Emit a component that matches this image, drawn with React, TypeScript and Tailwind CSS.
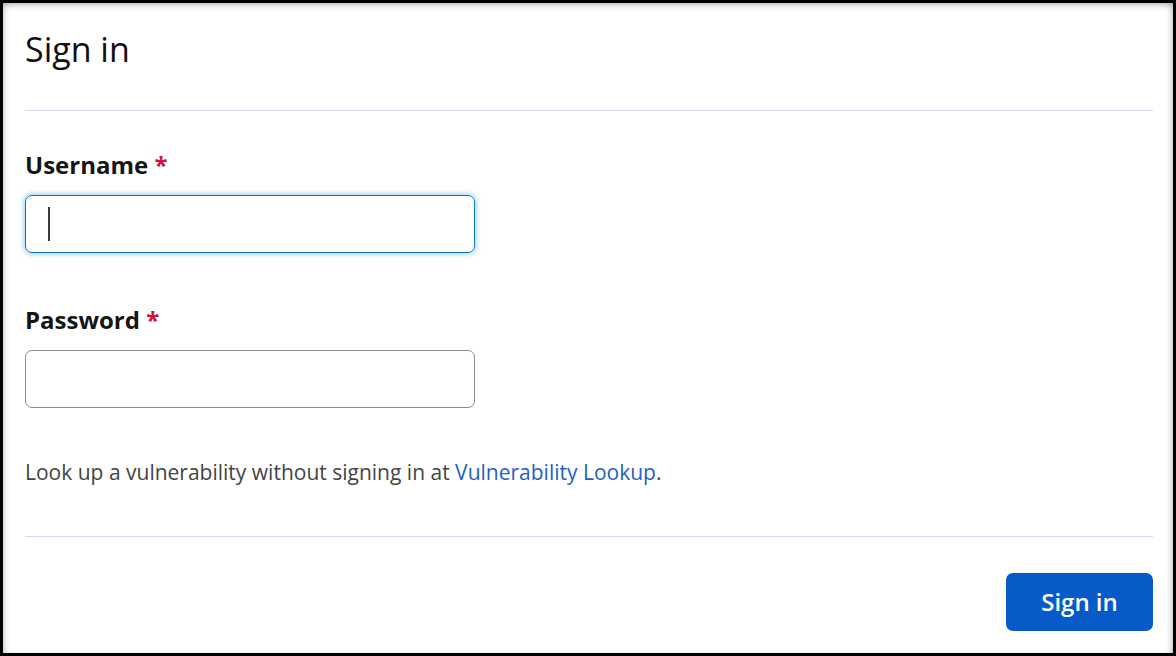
const font = { fontFamily: '"Open Sans", "Liberation Sans", sans-serif' };

const Field = ({ label, focused }: { label: string; focused?: boolean }) => {
  return (
    <div>
      <label className="block text-[24px] leading-[30px] font-bold text-[#151515]">
        {label} <span className="text-[#cf0f3a]">*</span>
      </label>
      {focused ? (
        <div className="mt-[15px] w-[450px] h-[58px] rounded-[7px] border border-[#0b78b0] shadow-[0_0_4px_2px_rgba(115,188,230,0.55)] flex items-center pl-[22px]">
          <span className="block w-[2px] h-[34px] bg-[#3a3a3a]" />
        </div>
      ) : (
        <div className="mt-[15px] w-[450px] h-[58px] rounded-[7px] border border-[#8a8d90]" />
      )}
    </div>
  );
};

const App = () => {
  return (
    <div style={font} className="h-[656px] w-[1176px] bg-white border-[3px] border-black">
      <div className="h-full shadow-[inset_0_5px_6px_-3px_rgba(0,0,0,0.25),inset_-5px_0_6px_-3px_rgba(0,0,0,0.2),inset_5px_0_6px_-3px_rgba(0,0,0,0.15)] pl-[22px] pr-[20px]">
        <div className="h-[108px] border-b border-[#d9d9ee] pt-[24px]">
          <h1 className="text-[34px] leading-[44px] font-medium text-[#0f0f0f]">Sign in</h1>
        </div>

        <div className="pt-[39px] flex flex-col gap-[52px]">
          <Field label="Username" focused />
          <Field label="Password" />
        </div>

        <p className="mt-[49px] text-[21px] leading-[30px] text-[#444444]">
          Look up a vulnerability without signing in at{" "}
          <a className="text-[#1f5fc4]">Vulnerability Lookup</a>.
        </p>

        <div className="mt-[49px] border-t border-[#d9d9ee]" />

        <div className="flex justify-end mt-[36px]">
          <button className="w-[147px] h-[58px] rounded-[7px] bg-[#065bc8] text-white text-[24px] font-semibold">
            Sign in
          </button>
        </div>
      </div>
    </div>
  );
};

export default App;
